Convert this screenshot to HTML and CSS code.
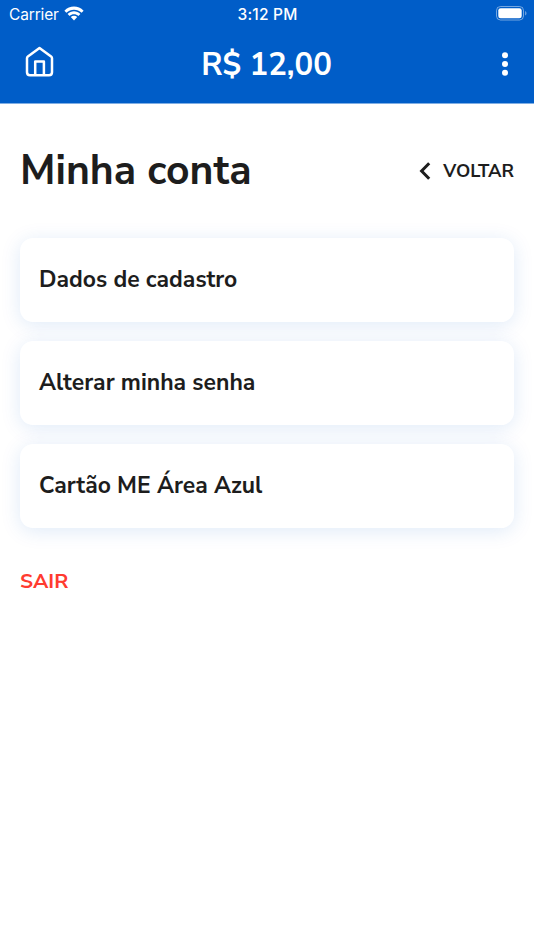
FILE: index.html
```html
<!DOCTYPE html>
<html lang="pt-BR">
<head>
    <meta charset="UTF-8">
    <meta name="viewport" content="width=device-width, initial-scale=1.0">
    <title>Minha conta</title>
    <link rel="stylesheet" href="styles.css">
</head>
<body>

<header class="header">
    <div class="status-bar">
        <div class="carrier">
            <span class="carrier-name">Carrier</span>
            <svg class="wifi" width="20" height="15" viewBox="0 0 20 15">
                <path d="M.4 4.7C5.7-.8 14.3-.8 19.6 4.7L17.6 6.7C13.4 2.7 6.6 2.7 2.4 6.7Z"/>
                <path d="M3.6 7.9C7.2 4.4 12.8 4.4 16.4 7.9L14.4 9.9C12 7.7 8 7.7 5.6 9.9Z"/>
                <path d="M6.8 11.1C8.6 9.4 11.4 9.4 13.2 11.1L10 14.4Z"/>
            </svg>
        </div>
        <span class="time">3:12 PM</span>
        <div class="battery">
            <svg width="31" height="15" viewBox="0 0 31 15">
                <rect x=".5" y=".5" width="27" height="13.5" rx="4" fill="none" stroke="#fff" stroke-opacity=".45"/>
                <rect x="2.3" y="2.3" width="23.4" height="9.9" rx="2.3" fill="#fff"/>
                <path d="M29.2 5v4.6c1.7-.8 1.7-3.8 0-4.6z" fill="#fff" fill-opacity=".5"/>
            </svg>
        </div>
    </div>
    <div class="nav-bar">
        <a class="home" href="#" aria-label="Início">
            <svg width="30" height="32" viewBox="0 0 30 32">
                <path d="M2 12.3Q2 11.2 2.9 10.5L14.5 2L26.1 10.5Q27 11.2 27 12.3V26.2Q27 29.2 24 29.2H5Q2 29.2 2 26.2Z"/>
                <path d="M10.2 29V15.5H18.9V29"/>
            </svg>
        </a>
        <span class="balance">R$ 12,00</span>
        <a class="menu" href="#" aria-label="Menu">
            <svg width="6" height="24" viewBox="0 0 6 24">
                <circle cx="3" cy="3.2" r="3"/>
                <circle cx="3" cy="12" r="3"/>
                <circle cx="3" cy="20.8" r="3"/>
            </svg>
        </a>
    </div>
</header>

<main class="content">
    <div class="title-row">
        <h1>Minha conta</h1>
        <a class="back" href="#">
            <svg width="12" height="18" viewBox="0 0 12 18">
                <path d="M10.2 1.2L2.6 9L10.2 16.8"/>
            </svg>
            <span>VOLTAR</span>
        </a>
    </div>

    <div class="cards">
        <a class="card" href="#">Dados de cadastro</a>
        <a class="card" href="#">Alterar minha senha</a>
        <a class="card" href="#">Cartão ME Área Azul</a>
    </div>

    <a class="logout" href="#">SAIR</a>
</main>

</body>
</html>
```

FILE: styles.css
```css
* {
    box-sizing: border-box;
}

body {
    margin: 0;
    font-family: "Nunito Sans", Nunito, Lato, sans-serif;
    font-weight: 680;
    color: #1d1d1d;
    background: #fff;
}

a {
    color: inherit;
    text-decoration: none;
}

svg {
    display: block;
}

.header {
    height: 104px;
    color: #fff;
    background: #005dc8;
    border-bottom: 1px solid #7faee4;
}

.status-bar {
    display: grid;
    grid-template-columns: 1fr auto 1fr;
    align-items: center;
    height: 27px;
    padding: 0 7px 0 9px;
    font-family: Inter, sans-serif;
    font-size: 15.5px;
    font-weight: 400;
}

.carrier {
    display: flex;
    align-items: center;
    gap: 5px;
}

.carrier-name,
.time {
    padding-top: 1px;
}

.carrier-name {
    letter-spacing: -0.15px;
}

.wifi {
    fill: #fff;
    margin-top: -1px;
}

.time {
    margin-left: -1px;
    font-weight: 500;
    letter-spacing: 0.2px;
}

.battery {
    justify-self: end;
}

.nav-bar {
    display: grid;
    grid-template-columns: 1fr auto 1fr;
    align-items: center;
    height: 74px;
    padding: 0 26px 0 25px;
}

.home svg {
    fill: none;
    stroke: #fff;
    stroke-width: 2.5;
    stroke-linejoin: round;
    margin-top: -4px;
}

.balance {
    font-size: 31.1px;
    padding-top: 1px;
}

.menu {
    justify-self: end;
}

.menu svg {
    fill: #fff;
}

.content {
    padding: 33px 20px 0;
}

.title-row {
    display: flex;
    justify-content: space-between;
    align-items: center;
    height: 66px;
}

h1 {
    margin: 0;
    font-size: 40.9px;
    font-weight: 700;
}

.back {
    display: flex;
    align-items: center;
    gap: 12px;
    font-size: 18.2px;
    margin-top: 2px;
}

.back svg {
    fill: none;
    stroke: #1d1d1d;
    stroke-width: 3;
}

.cards {
    display: flex;
    flex-direction: column;
    gap: 19px;
    margin-top: 35px;
}

.card {
    display: flex;
    align-items: center;
    height: 84px;
    padding: 0 19px 2px;
    font-size: 22.95px;
    font-weight: 700;
    background: #fff;
    border-radius: 13px;
    box-shadow: 0 3px 20px rgba(0, 93, 200, 0.13);
}

.logout {
    display: inline-block;
    margin-top: 39px;
    font-size: 20.7px;
    color: #ff3b30;
}
```
